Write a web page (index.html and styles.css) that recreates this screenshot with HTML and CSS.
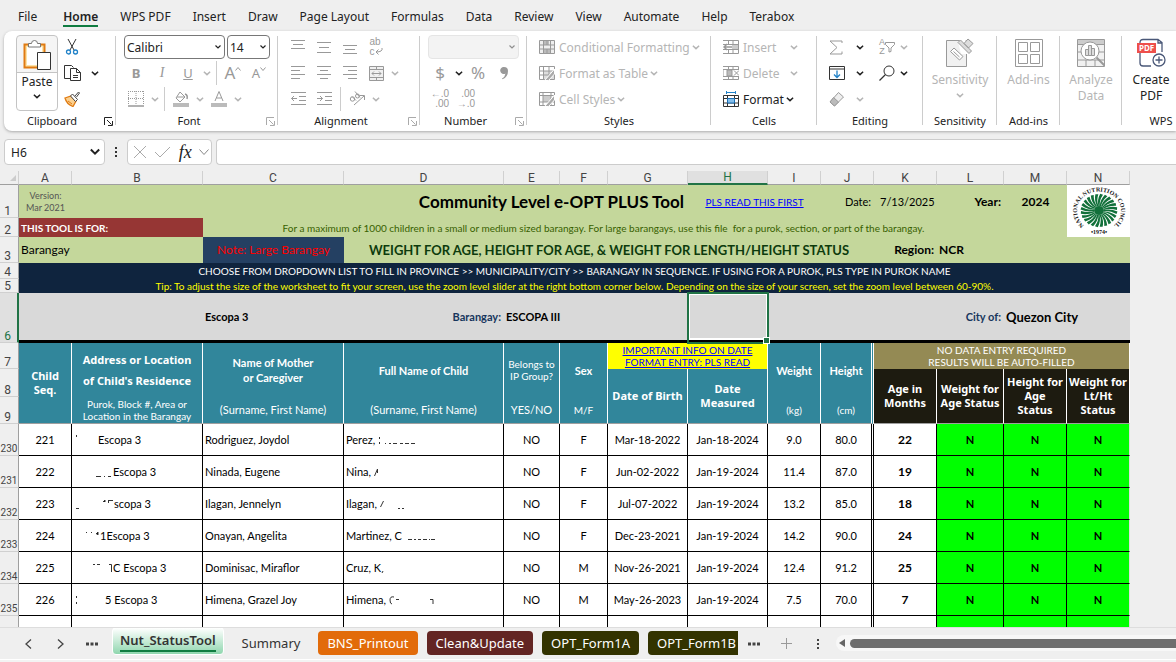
FILE: index.html
```html
<!DOCTYPE html>
<html lang="en">
<head>
  <meta charset="UTF-8">
  <meta name="viewport" content="width=device-width, initial-scale=1.0">
  <title>Community Level e-OPT PLUS Tool</title>
  <link rel="stylesheet" href="styles.css">
</head>
<body>
  <svg class="sprite" aria-hidden="true">
    <symbol id="chev" viewBox="0 0 8 8"><path d="M1.500 3 4 5.300 6.500 3" fill="none" stroke="currentColor" stroke-width="1.200"/></symbol>
    <symbol id="launch" viewBox="0 0 9 9"><path d="M8 .5H.5V8M3 3l4.500 4.500M8.500 4v4.500H4" fill="none" stroke="currentColor"/></symbol>
  </svg>

  <nav class="menu">
    <a href="#">File</a>
    <a href="#" class="current">Home</a>
    <a href="#">WPS PDF</a>
    <a href="#">Insert</a>
    <a href="#">Draw</a>
    <a href="#">Page Layout</a>
    <a href="#">Formulas</a>
    <a href="#">Data</a>
    <a href="#">Review</a>
    <a href="#">View</a>
    <a href="#">Automate</a>
    <a href="#">Help</a>
    <a href="#">Terabox</a>
  </nav>

  <div class="ribbon">
    <section class="group clipboard">
      <div class="tools side">
        <button class="paste">
          <svg width="28" height="32" viewBox="0 0 28 32"><path d="M1.500 5.500h20v23h-20z" fill="#fde3a7" stroke="#e07b12" stroke-width="2"/><path d="M4 8h15v18H4z" fill="#fff"/><path d="M5.500 8V4.500h3a3 3 0 0 1 6 0h3V8z" fill="#fff" stroke="#777"/><path d="M14.500 13.500h13v17h-13z" fill="#fff" stroke="#333"/></svg>
          <span>Paste</span>
          <svg class="chev"><use href="#chev"/></svg>
        </button>
        <div class="rows">
          <div class="row"><button class="ib" aria-label="Cut"><svg width="16" height="16" viewBox="0 0 16 16" fill="none"><path class="frame" d="m4 0 6 11M12 0 6 11"/><circle cx="4.500" cy="13" r="2" stroke="#2182c8" stroke-width="1.300"/><circle cx="11.500" cy="13" r="2" stroke="#2182c8" stroke-width="1.300"/></svg></button></div>
          <div class="row wide-gap"><button class="ib copy" aria-label="Copy"><svg width="17" height="16" viewBox="0 0 17 16" fill="#fff"><path d="M7 13.500H.5V.5h7l2 2"/><path d="M6.500 3.500h6l4 4v8h-10z"/><path d="M12.500 3.500v4h4M9 10.500h5M9 12.500h5" fill="none"/></svg></button><svg class="chev dark"><use href="#chev"/></svg></div>
          <div class="row"><button class="ib" aria-label="Format Painter"><svg width="16" height="16" viewBox="0 0 16 16"><path d="m1 7 6-2 5 5-3 5.500C5 14 2 11 1 7z" fill="#fbd08f" stroke="#e07b12" stroke-width="1.300"/><path d="m6.500 5 2-2 5 5.500-2 2zM11 5l3.500-4 1 1L12.500 6" fill="#fff" stroke="#444"/><path d="m4 10 4 3" stroke="#e07b12"/></svg></button></div>
        </div>
      </div>
      <footer><span>Clipboard</span><button class="launch dark" aria-label="Clipboard options"><svg><use href="#launch"/></svg></button></footer>
    </section>

    <section class="group font">
      <div class="tools">
        <div class="row">
          <select class="combo name" aria-label="Font"><option>Calibri</option></select>
          <select class="combo size" aria-label="Font size"><option>14</option></select>
        </div>
        <div class="row">
          <button class="ib"><b>B</b></button><button class="ib"><i>I</i></button><button class="ib"><u>U</u></button><svg class="chev"><use href="#chev"/></svg><hr>
          <button class="ib big" aria-label="Grow font">A<svg width="6" height="12" viewBox="0 0 6 12"><path d="m.5 3.500 2.500-3 2.500 3" fill="none"/></svg></button><button class="ib" aria-label="Shrink font">A<svg width="6" height="12" viewBox="0 0 6 12"><path d="m.5.500 2.500 3 2.500-3" fill="none"/></svg></button>
        </div>
        <div class="row">
          <button class="ib" aria-label="Borders"><svg width="16" height="16" viewBox="0 0 16 16" fill="none"><path d="M0 .5h16M.5 0v14M15.500 0v14M8 0v14M0 7.500h16" stroke-dasharray="1 1"/><path d="M0 15h16" stroke-width="1.500"/></svg></button><svg class="chev"><use href="#chev"/></svg><hr>
          <button class="ib" aria-label="Fill colour"><svg width="16" height="16" viewBox="0 0 16 16"><path d="m7 1 5 5-5 5-4-4zM4 6h8" fill="none"/><path d="M12 3q3 1 2 5" fill="none" stroke-width="1.500"/><path d="M0 12h16v4H0z" fill="#bbb" stroke="none"/></svg></button><svg class="chev"><use href="#chev"/></svg>
          <button class="ib" aria-label="Font colour"><svg width="16" height="16" viewBox="0 0 16 16"><path d="m4 10 4-9.500L12 10M5.500 7h5" fill="none"/><path d="M0 12h16v4H0z" fill="#bbb" stroke="none"/></svg></button><svg class="chev"><use href="#chev"/></svg>
        </div>
      </div>
      <footer><span>Font</span><button class="launch" aria-label="Font options"><svg><use href="#launch"/></svg></button></footer>
    </section>

    <section class="group align">
      <div class="tools">
        <div class="row">
          <button class="ib" aria-label="Top"><svg width="14" height="14" viewBox="0 0 14 14"><path d="M0 .5h14M2 4.500h10M0 8.500h14"/></svg></button>
          <button class="ib" aria-label="Middle"><svg width="14" height="14" viewBox="0 0 14 14"><path d="M0 2.500h14M2 7.500h10M0 12.500h14"/></svg></button>
          <button class="ib" aria-label="Bottom"><svg width="14" height="14" viewBox="0 0 14 14"><path d="M0 5.500h14M2 9.500h10M0 13.500h14"/></svg></button>
          <button class="ib wrap" aria-label="Wrap text"><span>ab<br>c<svg width="8" height="7" viewBox="0 0 8 7"><path d="M7 0q1 4-6 4M3.500 1.500 1 4l2.500 2.500" fill="none"/></svg></span></button>
        </div>
        <div class="row">
          <button class="ib" aria-label="Left"><svg width="14" height="14" viewBox="0 0 14 14"><path d="M0 .5h14M0 4.500h9M0 8.500h14M0 12.500h9"/></svg></button>
          <button class="ib" aria-label="Center"><svg width="14" height="14" viewBox="0 0 14 14"><path d="M0 .5h14M3 4.500h8M0 8.500h14M3 12.500h8"/></svg></button>
          <button class="ib" aria-label="Right"><svg width="14" height="14" viewBox="0 0 14 14"><path d="M0 .5h14M5 4.500h9M0 8.500h14M5 12.500h9"/></svg></button>
          <button class="ib" aria-label="Merge"><svg width="15" height="15" viewBox="0 0 15 15"><path d="M.5.500h14v14H.500zM.5 3.500h14M.5 11.500h14M7.500 0v3.500M7.500 11.500V15M3 7.500h9M5 5.500l-2 2 2 2M10 5.500l2 2-2 2" fill="#f0f0f0"/></svg></button><svg class="chev"><use href="#chev"/></svg>
        </div>
        <div class="row">
          <button class="ib" aria-label="Decrease indent"><svg width="15" height="14" viewBox="0 0 15 14"><path d="M0 .5h15M8 4.500h7M8 8.500h7M0 12.500h15M.5 6.500H6M3 4 .5 6.500 3 9" fill="none"/></svg></button>
          <button class="ib" aria-label="Increase indent"><svg width="15" height="14" viewBox="0 0 15 14"><path d="M0 .5h15M8 4.500h7M8 8.500h7M0 12.500h15M0 6.500h5.500M3 4l2.500 2.500L3 9" fill="none"/></svg></button><hr>
          <button class="ib" aria-label="Orientation"><svg width="17" height="16" viewBox="0 0 17 16" fill="none"><path d="m5 14 10-9M11 4.500h4.500V9"/><circle cx="3.500" cy="8" r="2.200"/><path d="m3 5.500 4 4M6 .5l5 6"/><circle cx="8.500" cy="5" r="2"/></svg></button><svg class="chev"><use href="#chev"/></svg>
        </div>
      </div>
      <footer><span>Alignment</span><button class="launch" aria-label="Alignment options"><svg><use href="#launch"/></svg></button></footer>
    </section>

    <section class="group number">
      <div class="tools">
        <div class="row"><select class="combo format" aria-label="Number format" disabled><option></option></select></div>
        <div class="row"><button class="ib large">$</button><svg class="chev dark"><use href="#chev"/></svg><button class="ib large">%</button><button class="ib" aria-label="Comma style"><svg width="9" height="14" viewBox="0 0 9 14"><path d="M4 1a3.500 3.500 0 1 0 1.500 6.500Q5 11 2 12.500l.5.800Q8 11 8 5 8 1 4 1z" fill="#999" stroke="none"/></svg></button></div>
        <div class="row">
          <button class="ib digits" aria-label="Increase decimal"><span>←.0<br>.00</span></button>
          <button class="ib digits" aria-label="Decrease decimal"><span>.00<br>→.0</span></button>
        </div>
      </div>
      <footer><span>Number</span><button class="launch" aria-label="Number options"><svg><use href="#launch"/></svg></button></footer>
    </section>

    <section class="group styles">
      <div class="tools">
        <div class="row"><button class="text"><svg width="16" height="14" viewBox="0 0 16 14"><path d="M.5.500h15v13H.5z" fill="#eee"/><path d="M5 1h5v4H5zM5 9h6v4H5z" fill="#bbb" stroke="none"/><path d="M0 5h16M0 9h16M4.500 0v14M8 0v5M8 9v5M11.500 0v14" fill="none"/></svg>Conditional Formatting<svg class="chev"><use href="#chev"/></svg></button></div>
        <div class="row"><button class="text"><svg width="16" height="15" viewBox="0 0 16 15"><path d="M.5.500h15v13H.5z" fill="#fff"/><path d="M5 5h10v8H5z" fill="#ddd" stroke="none"/><path d="M0 5h16M0 9h16M4.500 0v14M10 0v14" fill="none"/><path d="m15.500 3-6 7-4 4.500h4L15.500 8z" fill="#aaa" stroke="#fff"/></svg>Format as Table<svg class="chev"><use href="#chev"/></svg></button></div>
        <div class="row"><button class="text"><svg width="16" height="15" viewBox="0 0 16 15"><path d="M.5.500h15v13H.5z" fill="#fff"/><path d="M4 4h8v6H4z" fill="#ccc" stroke="none"/><path d="M0 3.500h16M0 10h16M4 0v14M12 0v14" fill="none"/><path d="m15.500 3-6 7-4 4.500h4L15.500 8z" fill="#aaa" stroke="#fff"/></svg>Cell Styles<svg class="chev"><use href="#chev"/></svg></button></div>
      </div>
      <footer><span>Styles</span></footer>
    </section>

    <section class="group cells">
      <div class="tools">
        <div class="row"><button class="text spread"><svg width="16" height="14" viewBox="0 0 16 14"><path d="M0 .5h15.500v13H0M0 4.500h16M0 9.500h16M5.500 0v4M10 0v14M5.500 10v4" fill="none"/><path d="M10 5h5v4h-5z" fill="#ccc" stroke="none"/><path d="M9 7H1M4 4 1 7l3 3" fill="none" stroke-width="1.500"/></svg><span>Insert</span><svg class="chev"><use href="#chev"/></svg></button></div>
        <div class="row"><button class="text spread"><svg width="16" height="14" viewBox="0 0 16 14"><path d="M0 .5h15.500V4M0 3.500h16M0 10.500h16M0 13.500h15.500V10M5.500 0v3M10 0v3M5.500 10v4M10 10v4M0 3v8" fill="none"/><path d="M4 4h5v6H4z" fill="#bbb"/><path d="m11 4.500 5 5m0-5-5 5"/></svg><span>Delete</span><svg class="chev"><use href="#chev"/></svg></button></div>
        <div class="row"><button class="text dark"><svg width="16" height="16" viewBox="0 0 16 16"><path class="frame" d="M.5 4.500h15v11H.5zM0 7.500h16M0 12h16M4.500 4v12M11.500 4v12" fill="none"/><path d="M4.500 7.500h7V12h-7z" fill="#83beec" stroke="#1a6fb5"/><path d="M3.500 1.500h9M3.500 0v3M12.500 0v3" stroke="#2182c8"/></svg>Format<svg class="chev"><use href="#chev"/></svg></button></div>
      </div>
      <footer><span>Cells</span></footer>
    </section>

    <section class="group editing">
      <div class="tools duo">
        <button class="ib" aria-label="AutoSum"><svg width="14" height="15" viewBox="0 0 14 15"><path d="M13 3V1H1l7 6.500L1 14h12v-2.500" fill="none"/></svg></button><svg class="chev dark"><use href="#chev"/></svg>
        <button class="ib sort" aria-label="Sort and Filter"><span>A<br>Z</span><svg width="10" height="11" viewBox="0 0 10 11"><path d="M.5.500h9v2L6 6v3.500L4 10V6L.5 2.500z" fill="none"/></svg></button><svg class="chev"><use href="#chev"/></svg>
        <button class="ib" aria-label="Fill"><svg width="16" height="14" viewBox="0 0 16 14"><path d="M.5.500h15v13H.5zM0 3h16" fill="none" stroke="#333"/><path d="M8 4.500v7M5 8.500l3 3 3-3" fill="none" stroke="#2182c8" stroke-width="1.300"/></svg></button><svg class="chev dark"><use href="#chev"/></svg>
        <button class="ib" aria-label="Find"><svg width="16" height="16" viewBox="0 0 16 16"><circle cx="10" cy="6" r="5" fill="none" stroke="#333"/><path d="M6.500 9.500.5 15.500" stroke="#333" stroke-width="1.300"/></svg></button><svg class="chev dark"><use href="#chev"/></svg>
        <button class="ib" aria-label="Clear"><svg width="16" height="15" viewBox="0 0 16 15"><path d="m9.500.500 5 4.500-9 9L1 10z" fill="#eee"/><path d="m4.500 5.500 5 4.500-4 4L1 10z" fill="#bbb"/></svg></button><svg class="chev"><use href="#chev"/></svg>
      </div>
      <footer><span>Editing</span></footer>
    </section>

    <section class="group sens">
      <div class="tools">
        <button class="tall"><svg width="28" height="30" viewBox="0 0 28 30"><path d="M.5 2.500h20v26H.5z" fill="#f1f1f1"/><path d="m12 4 5-4 11 10-4 6-9 0z" fill="#fff" stroke="none"/><path d="m4.500 13.500 3.500-3.500 9 8.500-3.500 3.500z" fill="#fff"/><path d="m7.500 13.500 6 5.500"/><path d="m12 4.500 2.500-2.500 11 11-2.500 2.500zM18 5.500l4-4.500 5 4.500-4.500 4.500z" fill="#ddd"/></svg>Sensitivity<svg class="chev"><use href="#chev"/></svg></button>
      </div>
      <footer><span>Sensitivity</span></footer>
    </section>

    <section class="group addins">
      <div class="tools">
        <button class="tall"><svg width="28" height="30" viewBox="0 0 28 30"><path d="M.5 1.500h27v27H.500zM3.500 4.500h9v9h-9zM15.500 4.500h9v9h-9zM3.500 16.500h9v9h-9zM15.500 16.500h9v9h-9z" fill="none"/></svg>Add-ins</button>
      </div>
      <footer><span>Add-ins</span></footer>
    </section>

    <section class="group analyze">
      <div class="tools">
        <button class="tall"><svg width="28" height="30" viewBox="0 0 28 30"><path d="M.5 1.500h27v27H.5z" fill="#f1f1f1"/><path d="M1 2h26v4H1z" fill="#ccc" stroke="none"/><path d="M0 6.500h28M0 14h28M0 22h28M9 22v6M18 22v6" fill="none"/><circle cx="13" cy="13" r="9" fill="#fff"/><path d="M8.500 11.500h3v6h-3zM11.500 7.500h3v10h-3zM14.500 10.500h3v7h-3z" fill="#ddd"/><path d="m19.500 19.500 8 8" stroke-width="2"/></svg>Analyze<br>Data</button>
      </div>
      <footer></footer>
    </section>

    <section class="group wps">
      <div class="tools">
        <button class="tall dark"><svg width="30" height="30" viewBox="0 0 30 30"><path d="M4 6V4.500q0-3 3-3h15l4 3V14M22 1.500V5h4M4 14v11q0 3 3 3h8" fill="none" stroke="#4a5878" stroke-width="1.300"/><path d="M1 5h19v10H1z" fill="#ee4f4b" stroke="none"/><text x="3" y="13">PDF</text><circle cx="23" cy="22" r="6" fill="#fff" stroke="#4a5878" stroke-width="1.300"/><path d="M23 18.500v7M19.500 22h7" stroke="#4a5878" stroke-width="1.300"/></svg>Create<br>PDF</button>
      </div>
      <footer><span>WPS</span></footer>
    </section>
  </div>

  <div class="formula-bar">
    <select class="cell-name" aria-label="Name box"><option>H6</option></select>
    <svg class="dots" width="4" height="12" viewBox="0 0 4 12"><path d="M1 1h2v2H1zM1 5h2v2H1zM1 9h2v2H1z" fill="#333"/></svg>
    <div class="fx">
      <button aria-label="Cancel"><svg width="14" height="12" viewBox="0 0 14 12"><path d="m1 0 12 12M13 0 1 12" stroke="#aaa"/></svg></button>
      <button aria-label="Enter"><svg width="17" height="12" viewBox="0 0 17 12"><path d="m1 6 5 5L16 1" fill="none" stroke="#aaa"/></svg></button>
      <button class="fn">fx</button>
      <svg width="10" height="6" viewBox="0 0 10 6"><path d="m.5.500 4.500 5 4.500-5" fill="none" stroke="#888"/></svg>
    </div>
    <input class="formula" type="text" aria-label="Formula">
  </div>

  <main class="sheet">
    <table>
      <colgroup>
        <col class="w-head"><col class="w-a"><col class="w-b"><col class="w-c"><col class="w-d"><col class="w-e"><col class="w-f"><col class="w-g"><col class="w-g"><col class="w-a"><col class="w-a"><col class="w-k"><col class="w-l"><col class="w-k"><col class="w-k">
      </colgroup>
      <thead>
        <tr class="letters">
          <th class="corner"><svg width="6" height="6" viewBox="0 0 6 6"><path d="M6 0v6H0z" fill="#ccc"/></svg></th>
          <th>A</th><th>B</th><th>C</th><th>D</th><th>E</th><th>F</th><th>G</th><th class="on">H</th><th>I</th><th>J</th><th>K</th><th>L</th><th>M</th><th>N</th>
        </tr>
      </thead>
      <tbody class="top">
        <tr class="r1">
          <th>1</th>
          <td class="version">Version:<br>Mar 2021</td>
          <td colspan="2"></td>
          <td class="title" colspan="4">Community Level e-OPT PLUS Tool</td>
          <td class="note" colspan="2"><a href="#">PLS READ THIS FIRST</a></td>
          <td class="right">Date:</td>
          <td class="left date">7/13/2025</td>
          <td class="right mid">Year:</td>
          <td class="mid">2024</td>
          <td class="logo" rowspan="2">
            <svg width="62" height="52" viewBox="0 0 62 52">
              <defs>
                <path id="ring" d="M18.500 42A22 19.500 0 1 1 43.500 42"/>
                <path id="ray" d="M5 .8Q11 0 17.500 4L18.500 1.200Q12-2 5-.6z"/>
              </defs>
              <g class="rays" transform="translate(31 25.500) scale(1 .9)">
                <circle r="5"/>
                <use href="#ray"/><use href="#ray" transform="rotate(15)"/><use href="#ray" transform="rotate(30)"/><use href="#ray" transform="rotate(45)"/><use href="#ray" transform="rotate(60)"/><use href="#ray" transform="rotate(75)"/>
                <use href="#ray" transform="rotate(90)"/><use href="#ray" transform="rotate(105)"/><use href="#ray" transform="rotate(120)"/><use href="#ray" transform="rotate(135)"/><use href="#ray" transform="rotate(150)"/><use href="#ray" transform="rotate(165)"/>
                <use href="#ray" transform="rotate(180)"/><use href="#ray" transform="rotate(195)"/><use href="#ray" transform="rotate(210)"/><use href="#ray" transform="rotate(225)"/><use href="#ray" transform="rotate(240)"/><use href="#ray" transform="rotate(255)"/>
                <use href="#ray" transform="rotate(270)"/><use href="#ray" transform="rotate(285)"/><use href="#ray" transform="rotate(300)"/><use href="#ray" transform="rotate(315)"/><use href="#ray" transform="rotate(330)"/><use href="#ray" transform="rotate(345)"/>
              </g>
              <text text-anchor="middle"><textPath href="#ring" startOffset="50%">NATIONAL NUTRITION COUNCIL</textPath></text>
              <text x="31" y="49" text-anchor="middle">•1974•</text>
            </svg>
          </td>
        </tr>
        <tr class="r2">
          <th>2</th>
          <td class="red" colspan="2">THIS TOOL IS FOR:</td>
          <td class="hint" colspan="10">For a maximum of 1000 children in a small or medium sized barangay. For large barangays, use this file&nbsp; for a purok, section, or part of the barangay.</td>
          <td></td>
        </tr>
        <tr class="r3">
          <th>3</th>
          <td class="left kind" colspan="2">Barangay</td>
          <td class="large">Note: Large Barangay</td>
          <td class="subtitle" colspan="7">WEIGHT FOR AGE, HEIGHT FOR AGE, &amp; WEIGHT FOR LENGTH/HEIGHT STATUS</td>
          <td class="right mid">Region:</td>
          <td class="left mid">NCR</td>
          <td colspan="2"></td>
        </tr>
        <tr class="r4 navy">
          <th>4</th>
          <td colspan="14">CHOOSE FROM DROPDOWN LIST TO FILL IN PROVINCE &gt;&gt; MUNICIPALITY/CITY &gt;&gt; BARANGAY IN SEQUENCE. IF USING FOR A PUROK, PLS TYPE IN PUROK NAME</td>
        </tr>
        <tr class="r5 navy">
          <th>5</th>
          <td class="tip" colspan="14">Tip: To adjust the size of the worksheet to fit your screen, use the zoom level slider at the right bottom corner below. Depending on the size of your screen, set the zoom level between 60-90%.</td>
        </tr>
        <tr class="r6">
          <th class="on">6</th>
          <td colspan="2"></td>
          <td class="left">Escopa 3</td>
          <td class="right blue">Barangay:</td>
          <td class="left" colspan="3">ESCOPA III</td>
          <td class="selected"></td>
          <td colspan="3"></td>
          <td class="right blue">City of:</td>
          <td class="left city" colspan="2">Quezon City</td>
        </tr>
      </tbody>
      <tbody class="heads">
        <tr class="r7">
          <th>7</th>
          <td class="wide" rowspan="3">Child<br>Seq.</td>
          <td class="wide loose" rowspan="2">Address or Location<br>of Child's Residence</td>
          <td class="strong" rowspan="2">Name of Mother<br>or Caregiver</td>
          <td class="strong" rowspan="2">Full Name of Child</td>
          <td class="small" rowspan="2">Belongs to<br>IP Group?</td>
          <td class="strong" rowspan="2">Sex</td>
          <td class="yellow small" colspan="2"><a href="#">IMPORTANT INFO ON DATE<br>FORMAT ENTRY: PLS READ</a></td>
          <td class="strong" rowspan="2">Weight</td>
          <td class="strong twin" rowspan="2">Height</td>
          <td class="olive small" colspan="4">NO DATA ENTRY REQUIRED<br>RESULTS WILL BE AUTO-FILLED</td>
        </tr>
        <tr class="r8">
          <th>8</th>
          <td class="wide" rowspan="2">Date of Birth</td>
          <td class="wide" rowspan="2">Date<br>Measured</td>
          <td class="wide black" rowspan="2">Age in<br>Months</td>
          <td class="wide black" rowspan="2">Weight for<br>Age Status</td>
          <td class="wide black" rowspan="2">Height for<br>Age<br>Status</td>
          <td class="wide black" rowspan="2">Weight for<br>Lt/Ht<br>Status</td>
        </tr>
        <tr class="r9">
          <th>9</th>
          <td class="small">Purok, Block #, Area or<br>Location in the Barangay</td>
          <td>(Surname, First Name)</td>
          <td>(Surname, First Name)</td>
          <td>YES/NO</td>
          <td class="small">M/F</td>
          <td class="small">(kg)</td>
          <td class="small twin">(cm)</td>
        </tr>
      </tbody>
      <tbody class="data">
        <tr>
          <th>230</th><td>221</td>
          <td class="left plain"><svg width="22" height="10" viewBox="0 0 22 10"><path d="M.5 0v2"/></svg>Escopa 3</td>
          <td class="left">Rodriguez, Joydol</td>
          <td class="left">Perez, <svg width="40" height="10" viewBox="0 0 40 10"><path d="M1.500 2v2M1.500 7v2M7 8.500h1M11 8.500h2M15 8.500h4M22 8.500h3M27 8.500h4M33 8.500h4"/></svg></td>
          <td>NO</td><td>F</td><td>Mar-18-2022</td><td>Jan-18-2024</td><td>9.0</td><td class="twin">80.0</td><td class="age">22</td><td class="ok">N</td><td class="ok">N</td><td class="ok">N</td>
        </tr>
        <tr>
          <th>231</th><td>222</td>
          <td class="left plain"><svg width="37" height="10" viewBox="0 0 37 10"><path d="M20 9.500h5M28 9.500h1M32 9.500h3"/></svg>Escopa 3</td>
          <td class="left">Ninada, Eugene</td>
          <td class="left">Nina, <svg width="40" height="10" viewBox="0 0 40 10"><path d="m.5 9 3-7M3.500 2v4"/></svg></td>
          <td>NO</td><td>F</td><td>Jun-02-2022</td><td>Jan-19-2024</td><td>11.4</td><td class="twin">87.0</td><td class="age">19</td><td class="ok">N</td><td class="ok">N</td><td class="ok">N</td>
        </tr>
        <tr>
          <th>232</th><td>223</td>
          <td class="left plain"><svg width="38" height="10" viewBox="0 0 38 10"><path d="M0 9.500h3M27 3l2-2v2M32 1.500h5M32.500 1v3"/></svg>scopa 3</td>
          <td class="left">Ilagan, Jennelyn</td>
          <td class="left">Ilagan, <svg width="40" height="10" viewBox="0 0 40 10"><path d="m.5 8 3-6M18 9.500h2M22 9.500h2"/></svg></td>
          <td>NO</td><td>F</td><td>Jul-07-2022</td><td>Jan-19-2024</td><td>13.2</td><td class="twin">85.0</td><td class="age">18</td><td class="ok">N</td><td class="ok">N</td><td class="ok">N</td>
        </tr>
        <tr>
          <th>233</th><td>224</td>
          <td class="left plain"><svg width="24" height="10" viewBox="0 0 24 10"><path d="M10 1.500h1M15 1.500h1M20 3l2-2v3"/></svg>1Escopa 3</td>
          <td class="left">Onayan, Angelita</td>
          <td class="left">Martinez, C<svg width="40" height="10" viewBox="0 0 40 10"><path d="M6 8.500h4M12 8.500h2M16 8.500h3M21 8.500h4M27 8.500h1M29 8.500h4"/></svg></td>
          <td>NO</td><td>F</td><td>Dec-23-2021</td><td>Jan-19-2024</td><td>14.2</td><td class="twin">90.0</td><td class="age">24</td><td class="ok">N</td><td class="ok">N</td><td class="ok">N</td>
        </tr>
        <tr>
          <th>234</th><td>225</td>
          <td class="left plain"><svg width="37" height="10" viewBox="0 0 37 10"><path d="M17 1.500h2M21 1.500h3M33 1.500h2.500V9" fill="none"/></svg>C Escopa 3</td>
          <td class="left">Dominisac, Miraflor</td>
          <td class="left">Cruz, K<svg width="10" height="10" viewBox="0 0 10 10"><path d="m2 8-1 2"/></svg></td>
          <td>NO</td><td>M</td><td>Nov-26-2021</td><td>Jan-19-2024</td><td>12.4</td><td class="twin">91.2</td><td class="age">25</td><td class="ok">N</td><td class="ok">N</td><td class="ok">N</td>
        </tr>
        <tr>
          <th>235</th><td>226</td>
          <td class="left plain"><svg width="29" height="10" viewBox="0 0 29 10"><path d="M.5 1v2M.5 7v2"/></svg>5 Escopa 3</td>
          <td class="left">Himena, Grazel Joy</td>
          <td class="left">Himena, <svg width="48" height="10" viewBox="0 0 48 10"><path d="M5 2Q1 1 1 5t2 4M7 4.500h3M41 4.500h3V9" fill="none"/></svg></td>
          <td>NO</td><td>M</td><td>May-26-2023</td><td>Jan-19-2024</td><td>7.5</td><td class="twin">70.0</td><td class="age">7</td><td class="ok">N</td><td class="ok">N</td><td class="ok">N</td>
        </tr>
        <tr>
          <th></th><td></td><td></td><td></td><td></td><td></td><td></td><td></td><td></td><td></td><td class="twin"></td><td></td><td class="ok"></td><td class="ok"></td><td class="ok"></td>
        </tr>
      </tbody>
    </table>
  </main>

  <div class="bottom">
    <div class="nav">
      <button aria-label="Previous sheet"><svg width="7" height="10" viewBox="0 0 7 10"><path d="M6 .5 1 5l5 4.500" fill="none" stroke="#444" stroke-width="1.300"/></svg></button>
      <button aria-label="Next sheet"><svg width="7" height="10" viewBox="0 0 7 10"><path d="m1 .5 5 4.500-5 4.500" fill="none" stroke="#444" stroke-width="1.300"/></svg></button>
      <button aria-label="More sheets"><svg width="12" height="4" viewBox="0 0 12 4"><path d="M0 .5h3v3H0zM4.500.500h3v3h-3zM9 .5h3v3H9z" fill="#444"/></svg></button>
    </div>
    <div class="tabs">
      <button class="tab active"><span>Nut_StatusTool</span></button>
      <button class="tab">Summary</button>
      <button class="tab orange">BNS_Printout</button>
      <button class="tab maroon">Clean&amp;Update</button>
      <button class="tab dark-olive">OPT_Form1A</button>
      <button class="tab dark-olive">OPT_Form1B</button>
    </div>
    <div class="nav after">
      <button aria-label="More"><svg width="12" height="4" viewBox="0 0 12 4"><path d="M0 .5h3v3H0zM4.500.500h3v3h-3zM9 .5h3v3H9z" fill="#444"/></svg></button>
      <button aria-label="New sheet"><svg width="11" height="11" viewBox="0 0 11 11"><path d="M5.500 0v11M0 5.500h11" stroke="#999"/></svg></button>
      <button aria-label="Resize"><svg width="4" height="12" viewBox="0 0 4 12"><path d="M1 1h2v2H1zM1 5h2v2H1zM1 9h2v2H1z" fill="#444"/></svg></button>
    </div>
    <div class="scroll">
      <svg width="6" height="8" viewBox="0 0 6 8"><path d="M6 0v8L0 4z" fill="#666"/></svg>
      <div class="thumb"></div>
    </div>
  </div>
  <div class="status"></div>
</body>
</html>
```

FILE: styles.css
```css
* {
  box-sizing: border-box;
}
body {
  margin: 0;
  height: 100vh;
  display: flex;
  flex-direction: column;
  overflow: hidden;
  background: #efefef;
  color: #222;
  font-family: "Noto Sans", sans-serif;
  font-size: 12px;
}
button {
  border: 0;
  padding: 0;
  background: none;
  font: inherit;
  color: inherit;
}
svg {
  flex: none;
}
.sprite {
  display: none;
}

/* menu */
.menu {
  display: flex;
  gap: 22px;
  height: 31px;
  padding: 8px 18px 0;
  white-space: nowrap;
}
.menu a {
  height: 19px;
  line-height: 18px;
  color: #222;
  text-decoration: none;
}
.menu .current {
  margin-left: 4px;
  font-weight: 600;
  border-bottom: 2px solid #107c41;
}

/* ribbon */
.ribbon {
  display: flex;
  flex: none;
  height: 100px;
  margin-left: 4px;
  padding-top: 3px;
  overflow: hidden;
  background: #fff;
  border-radius: 8px 0 0 8px;
  box-shadow: 0 1px 3px #aaa;
}
.group {
  position: relative;
  display: flex;
  flex-direction: column;
  flex: none;
  color: #b5b5b5;
}
.group::after {
  content: "";
  position: absolute;
  top: 2px;
  right: 0;
  bottom: 6px;
  border-right: 1px solid #ccc;
}
.clipboard { width: 112px; }
.font { width: 162px; }
.align { width: 142px; }
.number { width: 107px; }
.styles { width: 184px; }
.cells { width: 106px; }
.editing { width: 106px; }
.sens { width: 74px; }
.addins { width: 63px; }
.analyze { width: 62px; }
.wps { width: 78px; }
.tools {
  height: 78px;
  padding-left: 8px;
}
.side {
  display: flex;
  padding-left: 12px;
}
.row {
  display: flex;
  align-items: center;
  gap: 2px;
  height: 26px;
}
.row.wide-gap {
  gap: 6px;
}
.group footer {
  display: flex;
  height: 18px;
  line-height: 18px;
  color: #222;
  font-size: 11px;
}
.group footer span {
  flex: 1;
  text-align: center;
}
.launch {
  display: flex;
  align-items: center;
  justify-content: flex-end;
  width: 16px;
  padding-right: 3px;
  color: #aaa;
}
.launch svg {
  width: 9px;
  height: 9px;
}
.chev {
  width: 10px;
  height: 10px;
  flex: none;
}
.group .dark {
  color: #222;
}
.ib {
  display: flex;
  align-items: center;
  justify-content: center;
  width: 24px;
  height: 24px;
  color: #999;
  font-size: 13px;
  line-height: 14px;
}
.ib svg,
.text svg,
.tall svg {
  stroke: #999;
}
.copy svg,
.frame {
  stroke: #333;
}
.ib.big,
.ib.large {
  font-size: 17px;
}
.ib i {
  font-family: "Liberation Serif", serif;
  font-size: 14px;
}
.ib.wrap,
.ib.digits {
  font-family: "Liberation Sans", sans-serif;
  font-size: 10px;
  line-height: 10px;
  text-align: left;
}
.ib.digits {
  text-align: right;
}
.row hr {
  width: 1px;
  height: 24px;
  margin: 0 2px;
  border: 0;
  background: #ccc;
}
.paste {
  display: flex;
  flex-direction: column;
  align-items: center;
  width: 42px;
  height: 76px;
  margin: 1px 2px 0 0;
  padding-top: 3px;
  border: 1px solid #c4c4c4;
  border-radius: 4px;
  background: linear-gradient(#f5f5f5 36px, #c4c4c4 36px, #c4c4c4 37px, #fff 37px);
  color: #222;
}
.paste span {
  line-height: 18px;
  padding-top: 2px;
}
.combo,
.cell-name {
  appearance: none;
  height: 24px;
  padding: 0 2px;
  border: 1px solid #777;
  border-radius: 4px;
  background: #fff url("data:image/svg+xml,%3Csvg xmlns='http://www.w3.org/2000/svg' width='8' height='6' viewBox='0 0 8 6'%3E%3Cpath d='M1.500 1.500 4 4l2.500-2.500' fill='none' stroke='%23222' stroke-width='1.200'/%3E%3C/svg%3E") no-repeat right 2px center;
  color: #222;
  font: 12px "Noto Sans", sans-serif;
}
.combo.name {
  width: 101px;
}
.combo.size {
  width: 43px;
}
.combo.format {
  width: 91px;
  border-color: #ccc;
  background-color: #e8e8e8;
  opacity: .5;
}
.styles .tools,
.cells .tools,
.editing .tools {
  padding-left: 12px;
}
.text {
  display: flex;
  align-items: center;
  gap: 4px;
}
.text .chev {
  margin-left: -3px;
  stroke: none;
}
.spread span {
  width: 45px;
  text-align: left;
}
.duo {
  display: grid;
  grid-template-columns: 26px 24px 20px 8px;
  grid-auto-rows: 26px;
  align-items: center;
}
.duo .ib {
  justify-content: flex-start;
}
.ib.sort {
  font-family: "Liberation Sans", sans-serif;
  font-size: 9px;
  line-height: 9px;
}
.sens .tools,
.addins .tools,
.analyze .tools {
  padding: 0;
}
.wps .tools {
  width: 58px;
  padding: 0;
}
.tall {
  display: block;
  width: 100%;
  padding-top: 4px;
  line-height: 16px;
  text-align: center;
}
.tall svg {
  display: block;
  margin: 0 auto 4px;
}
.tall .chev {
  stroke: none;
  margin: 2px auto 0;
}
.tall text {
  fill: #fff;
  stroke: none;
  font-size: 8px;
  font-weight: bold;
}

/* formula bar */
.formula-bar {
  display: flex;
  align-items: center;
  flex: none;
  height: 26px;
  margin: 8px 0 6px 4px;
}
.formula-bar select,
.fx,
.formula {
  height: 26px;
  border: 1px solid #ccc;
  border-radius: 4px;
  background-color: #fff;
}
.cell-name {
  width: 101px;
  padding-left: 6px;
  background-size: 14px 10px;
}
.dots {
  margin: 0 9px;
}
.fx {
  display: flex;
  align-items: center;
  justify-content: space-between;
  width: 85px;
  margin-right: 4px;
  padding: 0 2px 0 5px;
}
.fx button {
  display: flex;
}
.fx .fn {
  color: #222;
  font: italic 18px/20px "Liberation Serif", serif;
}
.formula {
  flex: 1;
  border-right: 0;
  border-radius: 4px 0 0 4px;
}

/* sheet */
.sheet {
  flex: 1;
  min-height: 0;
  overflow: hidden;
}
table {
  width: 1130px;
  table-layout: fixed;
  border-collapse: separate;
  border-spacing: 0;
  font-family: Lato, sans-serif;
  font-size: 11px;
  line-height: 12px;
  color: #000;
}
.w-head { width: 19px; }
.w-a { width: 53px; }
.w-b { width: 131px; }
.w-c { width: 141px; }
.w-d { width: 160px; }
.w-e { width: 56px; }
.w-f { width: 48px; }
.w-g { width: 80px; }
.w-k { width: 63px; }
.w-l { width: 67px; }
td,
th {
  padding: 0;
  overflow: hidden;
  white-space: nowrap;
  text-align: center;
}
.left {
  padding-left: 2px;
  text-align: left;
}
.right {
  padding-right: 3px;
  text-align: right;
}
th {
  border-right: 1px solid #9f9f9f;
  border-bottom: 1px solid #d0d0d0;
  background: #efefef;
  color: #444;
  font: 12px/12px Roboto, sans-serif;
  vertical-align: bottom;
}
tbody th {
  padding-right: 3px;
}
.data th {
  padding-right: 0;
  font-size: 10px;
}
.letters th {
  height: 14px;
  border-right-color: #d0d0d0;
  border-bottom-color: #9f9f9f;
}
.letters .corner {
  padding: 0 2px 3px 0;
  text-align: right;
  line-height: 6px;
}
.letters .on {
  border-bottom: 2px solid #217346;
}
th.on {
  background: #e0e0e0;
  color: #217346;
}
tbody th.on {
  padding-right: 2px;
  border-right: 2px solid #217346;
}
.r1 { height: 33px; }
.r2 { height: 19px; }
.r3 { height: 26px; }
.r4 { height: 16px; }
.r5 { height: 14px; }
.r6 { height: 50px; }
.r7 { height: 26px; }
.r8 { height: 28px; }
.r9 { height: 27px; }

.top td {
  background: #c4d79b;
}
.top .version {
  color: #555;
  font-size: 9px;
}
.top .title {
  padding-right: 4px;
  text-align: right;
  font-size: 17px;
  font-weight: bold;
  line-height: 20px;
}
.top .note {
  font-size: 10px;
}
.top .date {
  padding-left: 6px;
}
.top .mid {
  font-size: 12px;
  font-weight: bold;
}
a {
  color: #00f;
}
.top .logo {
  background: #fff;
  line-height: 0;
}
.logo text {
  font: bold 6px "Liberation Serif", serif;
  fill: #111;
}
.rays {
  fill: #12703a;
}
.top .red {
  padding-left: 2px;
  background: #963634;
  color: #fff;
  font-size: 10px;
  font-weight: bold;
  text-align: left;
}
.top .hint {
  color: #375f00;
  font-size: 10px;
}
.top .kind {
  font-size: 12px;
}
.top .large {
  background: #244062;
  color: #f00;
  font-size: 12px;
}
.top .subtitle {
  color: #0d3b0d;
  font-size: 13px;
  font-weight: bold;
}
.top .navy td {
  background: #0f243e;
  color: #fff;
  font-size: 10px;
}
.top .navy .tip {
  color: #ff0;
}
.top .r6 td {
  border-bottom: 3px solid #000;
  background: #d9d9d9;
  font-weight: bold;
}
.top .r6 .blue {
  color: #17365d;
}
.top .r6 .city {
  font-size: 13px;
}
.top .r6 .selected {
  position: relative;
  overflow: visible;
  outline: 2px solid #217346;
  outline-offset: -1px;
  box-shadow: inset 0 0 0 2px #fff;
}
.selected::after {
  content: "";
  position: absolute;
  right: -2px;
  bottom: -4px;
  width: 5px;
  height: 5px;
  border: 1px solid #fff;
  background: #217346;
}

.heads td {
  border-right: 1px solid #fff;
  background: #31869b;
  color: #fff;
}
.heads .wide {
  font: bold 11px/14px "Noto Sans", sans-serif;
}
.heads .loose {
  line-height: 21px;
}
.heads .strong {
  font-weight: bold;
  line-height: 15px;
}
.heads .small {
  font-size: 10px;
}
.heads .yellow {
  background: #ff0;
}
.heads .olive {
  background: #948a54;
}
.heads .black {
  background: #1d1b10;
}
.heads .r9 td,
.heads td[rowspan="3"],
.r8 td {
  border-bottom: 1px solid #9f9f9f;
}

.data tr {
  height: 32px;
}
.data td {
  border-right: 1px solid #000;
  border-bottom: 1px solid #000;
  background: #fff;
}
.data .plain {
  padding-left: 4px;
}
.data td svg {
  stroke: #333;
  vertical-align: -1px;
}
.heads .twin {
  border-right: 3px double #fff;
}
.data .twin {
  border-right: 3px double #000;
}
.data .age {
  font-size: 12px;
  font-weight: bold;
}
.data .ok {
  background: #0f0;
  font-weight: bold;
}
.data td:last-child {
  border-right-color: #ddd;
}

/* sheet tabs */
.bottom {
  display: flex;
  flex: none;
  height: 32px;
  border-top: 1px solid #ddd;
}
.nav {
  display: flex;
  width: 112px;
  padding-left: 12px;
}
.nav button {
  display: flex;
  align-items: center;
  justify-content: center;
  width: 32px;
}
.nav.after {
  width: 98px;
  padding: 0;
}
.tabs {
  display: flex;
  gap: 9px;
  flex: 0 1 626px;
  overflow: hidden;
}
.tab {
  flex: none;
  height: 24px;
  margin-top: 3px;
  padding: 0 9px;
  border-radius: 4px;
  color: #333;
  font-size: 13px;
  line-height: 24px;
}
.tab.active {
  height: 28px;
  margin-top: -1px;
  padding: 0 7px;
  border: 1px solid #fff;
  background: linear-gradient(#fff, #8fd6ae);
  font-weight: 600;
}
.active span {
  display: block;
  border-bottom: 2px solid #107c41;
  line-height: 20px;
}
.tab.orange {
  background: #e26b0a;
  color: #fff;
}
.tab.maroon {
  background: #632523;
  color: #fff;
}
.tab.dark-olive {
  background: #333300;
  color: #fff;
}
.scroll {
  display: flex;
  align-items: center;
  gap: 5px;
  flex: 1;
  height: 16px;
  margin-top: 7px;
  padding-left: 3px;
  border-radius: 8px 0 0 8px;
  background: #f7f7f7;
}
.thumb {
  flex: 1;
  height: 9px;
  border-radius: 5px 0 0 5px;
  background: #6e6e6e;
}
.status {
  flex: none;
  height: 3px;
  border-top: 1px solid #fff;
  background: #f3f3f3;
}
```
